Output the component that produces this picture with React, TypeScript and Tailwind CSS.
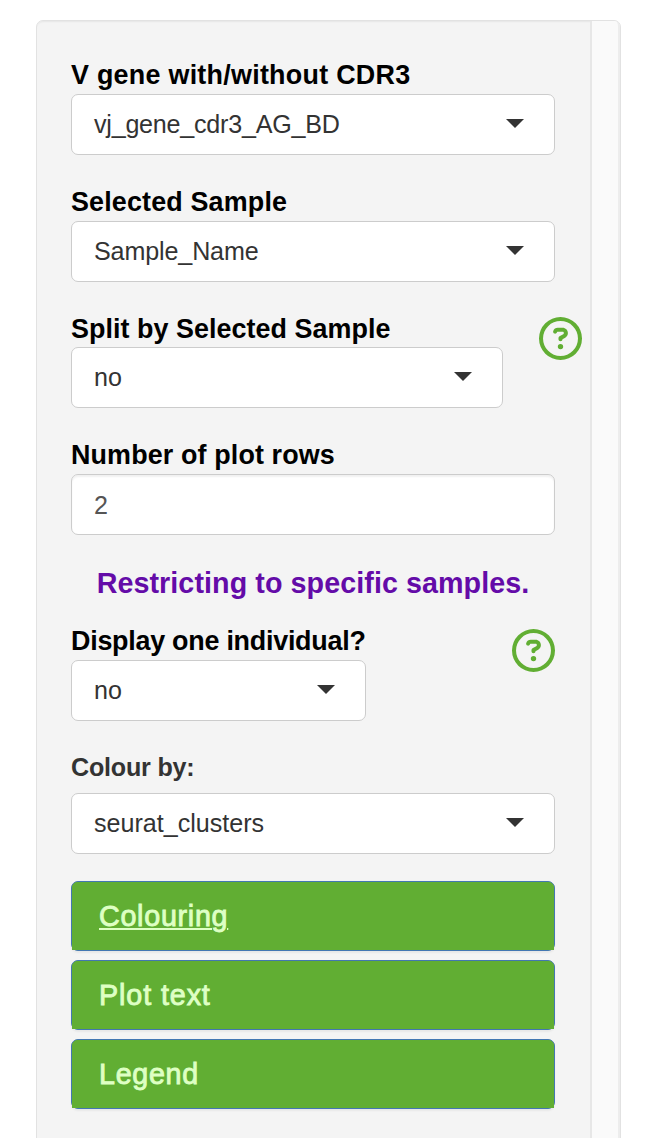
import React from "react";
import { FaRegCircleQuestion } from "react-icons/fa6";

function Select({
  value,
  className = "w-full",
  tracking = "",
}: {
  value: string;
  className?: string;
  tracking?: string;
}) {
  return (
    <button
      className={`flex h-[61px] items-center justify-between rounded-[7px] border border-[#ccc] bg-white pl-[22px] pr-[30px] text-[25.1px] leading-[36px] text-[#333] ${className}`}
    >
      <span className={`mb-0.5 whitespace-nowrap ${tracking}`}>{value}</span>
      <svg className="mb-0.5 h-[9px] w-[18px]" viewBox="0 0 18 9" fill="#333">
        <path d="M0 0h18L9 9z" />
      </svg>
    </button>
  );
}

function Label({ children, className = "" }: { children: React.ReactNode; className?: string }) {
  return (
    <div
      className={`flex h-[39px] items-center whitespace-nowrap text-[26.9px] font-bold leading-[38px] text-black ${className}`}
    >
      {children}
    </div>
  );
}

function Help({ className }: { className: string }) {
  return <FaRegCircleQuestion size={43} className={`shrink-0 text-[#61ae33] ${className}`} />;
}

function Section({ title, className }: { title: string; className: string }) {
  return (
    <div className="h-[70px] w-full rounded-[7px] border border-[#4377b2] bg-[#61ae33] shadow-[0_2px_2px_rgba(0,0,0,0.05)]">
      <button className="flex h-[68px] w-full items-center rounded-t-[6px] bg-[#61ae33] pl-[27px] pt-[2px] text-[28.7px] text-[#deffc4] [-webkit-text-stroke:0.9px_#deffc4]">
        <span className={className}>{title}</span>
      </button>
    </div>
  );
}

export default function App() {
  return (
    <div className="h-[1138px] overflow-hidden bg-white pl-[36px] pt-[20px] font-['Liberation_Sans',Arial,sans-serif]">
      <div className="flex h-[1140px] w-[585px] rounded-[7px] border border-[#e2e2e2] bg-[#f4f4f4] shadow-[inset_0_2px_2px_-1px_rgba(0,0,0,0.06)]">
        <div className="w-[553px] shrink-0 pl-[34px] pt-[34px]">
          <div className="w-[484px]">
            <Label className="tracking-[0.26px]">V gene with/without CDR3</Label>
            <Select value="vj_gene_cdr3_AG_BD" tracking="tracking-[-0.23px]" />
            <div className="mt-[27px]">
              <Label className="tracking-[0.16px]">Selected Sample</Label>
              <Select value="Sample_Name" tracking="tracking-[-0.13px]" />
            </div>
            <div className="mt-[26px] flex w-[511px] items-start justify-between">
              <div>
                <Label className="pt-[2px] tracking-[0.05px]">Split by Selected Sample</Label>
                <Select value="no" className="w-[432px]" />
              </div>
              <Help className="mt-[9px]" />
            </div>
            <div className="mt-[27px]">
              <Label className="tracking-[0.13px]">Number of plot rows</Label>
              <input
                className="h-[61px] w-full rounded-[7px] border border-[#ccc] bg-white pl-[22px] pt-[2px] text-[25.1px] text-[#555] shadow-[inset_0_2px_2px_rgba(0,0,0,0.06)] outline-none"
                defaultValue="2"
              />
            </div>
            <h4 className="mt-[30px] whitespace-nowrap text-center text-[28.7px] font-bold leading-[36px] tracking-[0.07px] text-[#640ba8]">
              Restricting to specific samples.
            </h4>
            <div className="mt-[20px] flex items-start justify-between">
              <div>
                <Label className="tracking-[-0.25px]">Display one individual?</Label>
                <Select value="no" className="w-[295px]" />
              </div>
              <Help className="mt-[8px]" />
            </div>
            <div className="mt-[28px] flex h-[36px] items-center pt-[2px] text-[25.1px] font-bold tracking-[-0.2px] text-[#333]">
              Colour by:
            </div>
            <div className="pt-[8px]">
              <Select value="seurat_clusters" />
            </div>
            <div className="mt-[27px] flex flex-col gap-[9px]">
              <Section
                title="Colouring"
                className="tracking-[0.72px] underline decoration-2 underline-offset-[2px]"
              />
              <Section title="Plot text" className="tracking-[0.9px]" />
              <Section title="Legend" className="tracking-[0.7px]" />
            </div>
          </div>
        </div>
        <div className="grow rounded-tr-[5px] border-x-2 border-l-[#e7e7e7] border-r-[#ededed] bg-[#fafafa]" />
      </div>
    </div>
  );
}
